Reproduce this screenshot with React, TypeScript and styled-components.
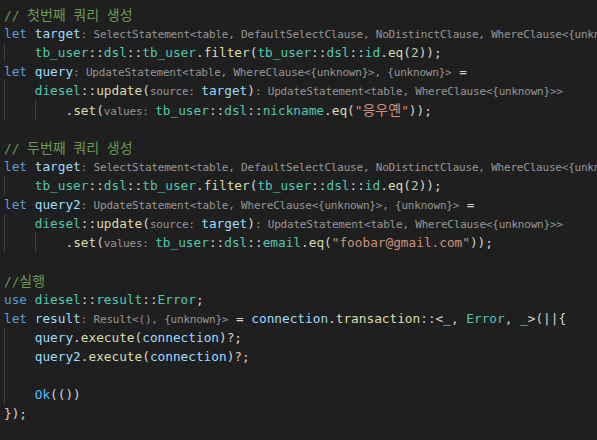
import React from 'react';
import styled, { createGlobalStyle } from 'styled-components';

const GlobalStyle = createGlobalStyle`
  html, body {
    margin: 0;
    padding: 0;
    background: #1f1f1f;
  }
`;

type Kind = 'kw' | 'v' | 'f' | 'n' | 'num' | 's' | 'c' | 'p' | 'h' | 'e';
type Tok = [Kind, string];

const colors: Record<Kind, string> = {
  kw: '#569cd6',
  v: '#9cdcfe',
  f: '#dcdcaa',
  n: '#4ec9b0',
  num: '#b5cea8',
  s: '#ce9178',
  c: '#6a9955',
  p: '#d4d4d4',
  h: '#969696',
  e: '#4fc1ff',
};

const Editor = styled.div`
  width: 597px;
  height: 440px;
  box-sizing: border-box;
  padding: 5px 0 0 4px;
  overflow: hidden;
  background: #1f1f1f;
  font-family: 'DejaVu Sans Mono', 'Noto Sans CJK KR', monospace;
  font-size: 12.76px;
  color: #d4d4d4;
`;

const Line = styled.div`
  height: 19px;
  line-height: 19px;
  white-space: pre;
  overflow: hidden;
`;

const Indent = styled.span`
  display: inline-block;
  height: 19px;
  vertical-align: top;
  background-image: linear-gradient(to right, #404040 1px, transparent 1px);
`;

const Token = styled.span<{ $kind: Kind }>`
  color: ${p => colors[p.$kind]};
  ${p => p.$kind === 'h' && `
    font-size: 11px;
    letter-spacing: -0.21px;
  `}
`;

const Ko = styled.span`
  font-family: 'Noto Sans CJK KR', sans-serif;
  font-size: 14px;
  letter-spacing: 0;
`;

const renderText = (text: string) =>
  text.split(/([\uAC00-\uD7A3]+)/).map((part, i) =>
    /[\uAC00-\uD7A3]/.test(part) ? <Ko key={i}>{part}</Ko> : part
  );

// the editor cuts this hint at its right edge
const selectHint: Tok = [
  'h',
  ': SelectStatement<table, DefaultSelectClause, NoDistinctClause, WhereClause<{unkn',
];

const filterLine: Tok[] = [
  ['n', 'tb_user'], ['p', '::'], ['n', 'dsl'], ['p', '::'], ['n', 'tb_user'], ['p', '.'],
  ['f', 'filter'], ['p', '('], ['n', 'tb_user'], ['p', '::'], ['n', 'dsl'], ['p', '::'],
  ['n', 'id'], ['p', '.'], ['f', 'eq'], ['p', '('], ['num', '2'], ['p', '));'],
];

const updateLine: Tok[] = [
  ['n', 'diesel'], ['p', '::'], ['f', 'update'], ['p', '('], ['h', 'source: '], ['v', 'target'],
  ['p', ')'], ['h', ': UpdateStatement<table, WhereClause<{unknown}>>'],
];

const queryLine = (name: string): Tok[] => [
  ['kw', 'let'], ['p', ' '], ['v', name],
  ['h', ': UpdateStatement<table, WhereClause<{unknown}>, {unknown}>'], ['p', ' ='],
];

const setLine = (field: string, value: string): Tok[] => [
  ['p', '.'], ['f', 'set'], ['p', '('], ['h', 'values: '], ['n', 'tb_user'], ['p', '::'],
  ['n', 'dsl'], ['p', '::'], ['n', field], ['p', '.'], ['f', 'eq'], ['p', '('],
  ['s', `"${value}"`], ['p', '));'],
];

const lines: { indent: number; toks: Tok[] }[] = [
  { indent: 0, toks: [['c', '// 첫번째 쿼리 생성']] },
  { indent: 0, toks: [['kw', 'let'], ['p', ' '], ['v', 'target'], selectHint] },
  { indent: 1, toks: filterLine },
  { indent: 0, toks: queryLine('query') },
  { indent: 1, toks: updateLine },
  { indent: 2, toks: setLine('nickname', '응우옌') },
  { indent: 0, toks: [] },
  { indent: 0, toks: [['c', '// 두번째 쿼리 생성']] },
  { indent: 0, toks: [['kw', 'let'], ['p', ' '], ['v', 'target'], selectHint] },
  { indent: 1, toks: filterLine },
  { indent: 0, toks: queryLine('query2') },
  { indent: 1, toks: updateLine },
  { indent: 2, toks: setLine('email', 'foobar@gmail.com') },
  { indent: 0, toks: [] },
  { indent: 0, toks: [['c', '//실행']] },
  {
    indent: 0,
    toks: [['kw', 'use'], ['p', ' '], ['n', 'diesel'], ['p', '::'], ['n', 'result'], ['p', '::'], ['n', 'Error'], ['p', ';']],
  },
  {
    indent: 0,
    toks: [
      ['kw', 'let'], ['p', ' '], ['v', 'result'], ['h', ': Result<(), {unknown}>'], ['p', ' = '],
      ['v', 'connection'], ['p', '.'], ['f', 'transaction'], ['p', '::<'], ['v', '_'], ['p', ', '],
      ['n', 'Error'], ['p', ', '], ['v', '_'], ['p', '>(||{'],
    ],
  },
  { indent: 1, toks: [['v', 'query'], ['p', '.'], ['f', 'execute'], ['p', '('], ['v', 'connection'], ['p', ')?;']] },
  { indent: 1, toks: [['v', 'query2'], ['p', '.'], ['f', 'execute'], ['p', '('], ['v', 'connection'], ['p', ')?;']] },
  { indent: 1, toks: [] },
  { indent: 1, toks: [['e', 'Ok'], ['p', '(())']] },
  { indent: 0, toks: [['p', '});']] },
];

export default function App() {
  return (
    <>
      <GlobalStyle />
      <Editor>
        {lines.map((line, i) => (
          <Line key={i}>
            {Array.from({ length: line.indent }).map((_, j) => (
              <Indent key={j}>{'    '}</Indent>
            ))}
            {line.toks.map(([kind, text], j) => (
              <Token key={j} $kind={kind}>{renderText(text)}</Token>
            ))}
          </Line>
        ))}
      </Editor>
    </>
  );
}
